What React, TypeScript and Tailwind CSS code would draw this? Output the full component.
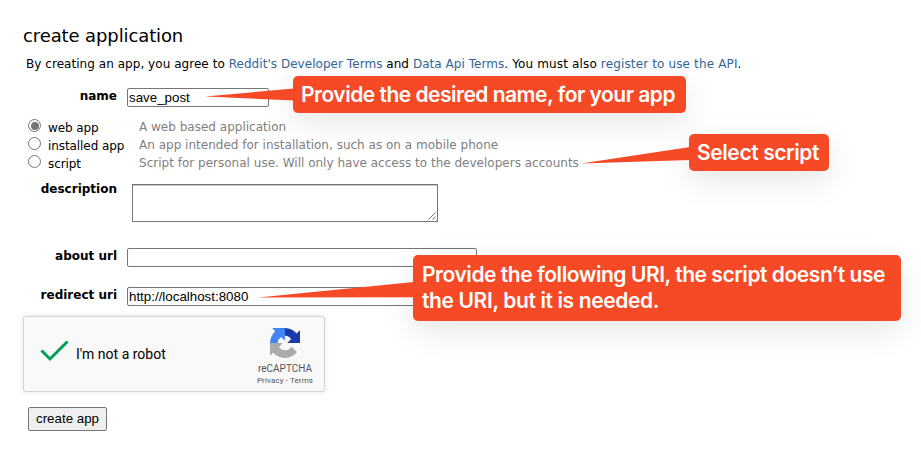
import type { ReactNode } from "react";

const verdana = "font-['DejaVu_Sans',sans-serif]";
const arial = "font-['Liberation_Sans',sans-serif]";

function Label({ children }: { children: ReactNode }) {
  return (
    <label className="w-[117px] shrink-0 text-right text-[12px] leading-[16px] font-bold">
      {children}
    </label>
  );
}

function Radio({ label, hint, checked }: { label: string; hint: string; checked?: boolean }) {
  return (
    <div className="flex h-[18px] text-[12px] leading-[18px] whitespace-nowrap">
      <span className="ml-7 mt-px flex h-[13px] w-[13px] shrink-0 items-center justify-center rounded-full border border-[#767676] bg-white">
        {checked && <span className="h-[8px] w-[8px] rounded-full bg-[#767676]" />}
      </span>
      <span className="ml-[7px] w-[91px] shrink-0 pt-[1px] tracking-[-0.08px]">{label}</span>
      <span className="tracking-[0.01px] text-[#808080]">{hint}</span>
    </div>
  );
}

function Callout({ className, children }: { className: string; children: ReactNode }) {
  return (
    <div
      className={`absolute rounded-[5px] bg-[#f64925] font-['Inter',sans-serif] text-[21px] leading-[26px] font-semibold whitespace-nowrap text-white shadow-[0_10px_32px_rgba(0,0,0,0.1)] ${className}`}
    >
      {children}
    </div>
  );
}

export default function App() {
  return (
    <div className={`relative flex h-[471px] w-[921px] flex-col overflow-hidden bg-white text-black ${verdana}`}>
      <h1 className="mt-[24px] ml-[23px] h-[24px] text-[18px] leading-[24px] tracking-[-0.11px] whitespace-nowrap">create application</h1>
      <p className="mt-[7px] ml-[26px] h-[18px] text-[12px] leading-[18px] tracking-[0.045px] whitespace-nowrap">
        By creating an app, you agree to <a className="text-[#336699]">Reddit's Developer Terms</a> and{" "}
        <a className="text-[#336699]">Data Api Terms</a>
        <span className="tracking-[0.14px]">
          . You must also <a className="text-[#336699]">register to use the API</a>.
        </span>
      </p>

      <div className="mt-[15px] flex h-[19px]">
        <Label>name</Label>
        <div className={`ml-[10px] w-[142px] rounded-[2px] border border-[#767676] bg-white px-px text-[13.33px] leading-[17px] ${arial}`}>
          save_post
        </div>
      </div>

      <div className="mt-[11px] flex flex-col">
        <Radio label="web app" hint="A web based application" checked />
        <Radio label="installed app" hint="An app intended for installation, such as on a mobile phone" />
        <Radio label="script" hint="Script for personal use. Will only have access to the developers accounts" />
      </div>

      <div className="mt-[9px] flex h-[41px]">
        <Label>description</Label>
        <div className="mt-[3px] ml-[15px] flex h-[38px] w-[306px] items-end justify-end border border-[#767676] bg-white shadow-[inset_0_1px_0_#c4c4c4]">
          <svg className="mr-px mb-px h-[8px] w-[8px]" viewBox="0 0 8 8" fill="none" stroke="#555" strokeWidth="0.8">
            <path d="M0.5 7.5 7.5 0.5M4.5 7.5 7.5 4.5" />
          </svg>
        </div>
      </div>

      <div className="mt-[26px] flex h-[19px]">
        <Label>about url</Label>
        <div className="ml-[10px] w-[350px] rounded-[2px] border border-[#767676] bg-white" />
      </div>

      <div className="mt-[20px] flex h-[19px]">
        <Label>redirect uri</Label>
        <div className={`ml-[10px] w-[350px] rounded-[2px] border border-[#767676] bg-white px-px text-[13.33px] leading-[17px] ${arial}`}>
          http://localhost:8080
        </div>
      </div>

      <div className="mt-[10px] ml-[23px] flex h-[76px] w-[302px] rounded-[3px] border border-[#d3d3d3] bg-[#f9f9f9] font-['Roboto',sans-serif] shadow-[0_0_4px_1px_rgba(0,0,0,0.08)]">
        <svg className="mt-[22px] ml-[16px] h-[24px] w-[30px] shrink-0" viewBox="0 0 30 24" fill="none" stroke="#009e55" strokeWidth="3">
          <path d="M1.5 11.5 10 20 27.5 2.5" />
        </svg>
        <span className="mt-[27px] ml-[6px] w-[170px] shrink-0 text-[14px] leading-[20px] whitespace-nowrap">I'm not a robot</span>
        <div className="flex w-[78px] flex-col items-center whitespace-nowrap text-[#555]">
          <svg className="mt-[11px] h-[30px] w-[30px] shrink-0" viewBox="0 0 64 64">
            <path d="M64 31.955c-.001-.46-.012-.918-.033-1.374V4.687l-7.158 7.16C50.95 4.674 42.033.093 32.05.093c-10.4 0-19.622 4.96-25.458 12.64l11.736 11.86a15.55 15.55 0 0 1 4.754-5.334c2.05-1.6 4.952-2.906 8.968-2.906.485 0 .86.057 1.135.163 4.976.393 9.288 3.14 11.828 7.124l-8.307 8.307L64 31.953" fill="#1c3aa9" />
            <path d="M31.862.094c-.46.001-.918.012-1.374.033H4.594l7.16 7.158C4.58 13.147 0 22.06 0 32.046c0 10.4 4.96 19.622 12.64 25.458L24.5 45.768a15.55 15.55 0 0 1-5.334-4.754c-1.6-2.05-2.906-4.952-2.906-8.968 0-.485.057-.86.163-1.135.393-4.976 3.14-9.288 7.124-11.828l8.307 8.307L31.86.095" fill="#4285f4" />
            <path d="M.001 32.045c.001.46.012.918.033 1.374v25.894l7.158-7.16c5.862 7.173 14.776 11.753 24.76 11.753 10.4 0 19.622-4.96 25.458-12.64l-11.736-11.86a15.55 15.55 0 0 1-4.754 5.334c-2.05 1.6-4.952 2.906-8.968 2.906-.485 0-.86-.057-1.135-.163-4.976-.393-9.288-3.14-11.828-7.124l8.307-8.307L0 32.045" fill="#ababab" />
          </svg>
          <span className="mt-[5px] text-[10px] leading-[12px]">reCAPTCHA</span>
          <span className="text-[8px] leading-[11px] tracking-[0.12px]">Privacy - Terms</span>
        </div>
      </div>

      <button className={`mt-[15px] ml-[28px] h-[24px] w-[79px] rounded-[2px] border border-[#767676] bg-[#efefef] text-[13.33px] leading-[22px] whitespace-nowrap ${arial}`}>
        create app
      </button>

      <Callout className="top-[76px] left-[293px] h-[37px] w-[393px] pt-[6px] pl-[8px] tracking-[-0.5px]">Provide the desired name, for your app</Callout>
      <Callout className="top-[134px] left-[689px] h-[37px] w-[140px] pt-[6px] pl-[8px] tracking-[-0.4px]">Select script</Callout>
      <Callout className="top-[255px] left-[413px] h-[66px] w-[488px] pt-[7px] pl-[9px] tracking-[-0.45px]">
        Provide the following URI, the script doesn’t use
        <br />
        <span className="tracking-[-0.37px]">the URI, but it is needed.</span>
      </Callout>
      <svg className="absolute inset-0 h-[471px] w-[921px]" viewBox="0 0 921 471" fill="#f64925">
        <path d="M205 96.5 294 88.5V100.5Z" />
        <path d="M581 163.5 690 147V160Z" />
        <path d="M258 297.5 414 282V297.3Z" />
      </svg>
    </div>
  );
}
